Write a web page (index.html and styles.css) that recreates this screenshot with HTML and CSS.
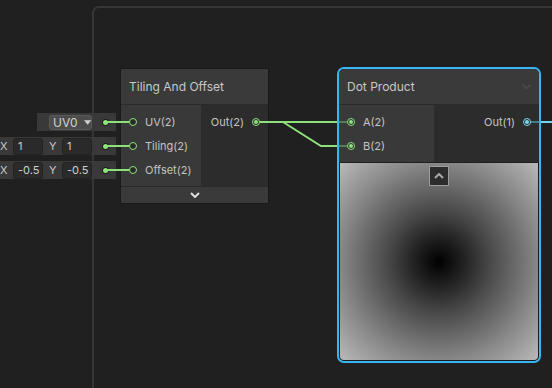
FILE: index.html
```html
<!DOCTYPE html>
<html>
<head>
<meta charset="utf-8">
<link rel="stylesheet" href="styles.css">
</head>
<body>
<div class="canvas">
  <div class="group"></div>

  <div class="inputs-stack">
    <div class="in-row">
      <span class="dropdown">UV0<svg width="8" height="5" viewBox="0 0 8 5"><path d="M0 0H8L4 5Z" fill="#d2d2d2"/></svg></span>
      <span class="wire-dot"></span>
    </div>
    <div class="in-row">
      <span class="lbl">X</span><span class="field">1</span><span class="lbl">Y</span><span class="field">1</span>
      <span class="wire-dot"></span>
    </div>
    <div class="in-row">
      <span class="lbl">X</span><span class="field">-0.5</span><span class="lbl">Y</span><span class="field">-0.5</span>
      <span class="wire-dot"></span>
    </div>
  </div>

  <div class="node tiling">
    <div class="node-header"><span class="title">Tiling And Offset</span></div>
    <div class="node-body">
      <div class="col inputs">
        <div class="port-row"><span class="port"></span><span class="plabel">UV(2)</span></div>
        <div class="port-row"><span class="port"></span><span class="plabel">Tiling(2)</span></div>
        <div class="port-row"><span class="port"></span><span class="plabel">Offset(2)</span></div>
      </div>
      <div class="col outputs">
        <div class="port-row out"><span class="plabel">Out(2)</span><span class="port on"></span></div>
      </div>
    </div>
    <div class="node-footer">
      <svg width="10" height="6" viewBox="0 0 10 6"><polyline points="1,1 5,5 9,1" fill="none" stroke="#dcdcdc" stroke-width="2"/></svg>
    </div>
  </div>

  <div class="node dot">
    <div class="node-header">
      <span class="title">Dot Product</span>
      <svg class="hdr-chev" width="9" height="5" viewBox="0 0 9 5"><polyline points="0.5,0.5 4.5,4.5 8.5,0.5" fill="none" stroke="#4e4e4e" stroke-width="1.2"/></svg>
    </div>
    <div class="node-body">
      <div class="col inputs">
        <div class="port-row"><span class="port on"></span><span class="plabel">A(2)</span></div>
        <div class="port-row"><span class="port on"></span><span class="plabel">B(2)</span></div>
      </div>
      <div class="col outputs">
        <div class="port-row out"><span class="plabel">Out(1)</span><span class="port on cyan"></span></div>
      </div>
    </div>
    <div class="preview">
      <span class="collapse-btn">
        <svg width="10" height="6" viewBox="0 0 10 6"><polyline points="1,5 5,1 9,5" fill="none" stroke="#a9a9a9" stroke-width="2"/></svg>
      </span>
    </div>
  </div>

  <svg class="wires" width="552" height="388" viewBox="0 0 552 388">
    <g stroke="#8de27e" stroke-width="2" fill="none">
      <path d="M106 122H133"/>
      <path d="M106 146H133"/>
      <path d="M106 170H133"/>
      <path d="M256 122H337"/>
      <path d="M283 122L321 146H337"/>
    </g>
    <g stroke="#5b785b" stroke-width="2" fill="none">
      <path d="M339 122H351"/>
      <path d="M339 146H351"/>
    </g>
    <path d="M527 122H539" stroke="#3f7d89" stroke-width="2"/>
    <path d="M541 122H552" stroke="#72d6f2" stroke-width="2"/>
  </svg>
</div>
</body>
</html>
```

FILE: styles.css
```css
* { box-sizing: border-box; }

body {
  margin: 0;
  background: #202020;
  font-family: Inter, "Noto Sans", sans-serif;
}

.canvas {
  position: relative;
  width: 552px;
  height: 388px;
  overflow: hidden;
  background: #202020;
}

.group {
  position: absolute;
  left: 92px;
  top: 6px;
  width: 520px;
  height: 420px;
  border: 2px solid #363636;
  border-radius: 7px;
}

/* inline input fields to the left of the node */
.inputs-stack {
  position: absolute;
  right: 436px;
  top: 113px;
  display: flex;
  flex-direction: column;
  align-items: flex-end;
  gap: 6px;
}

.in-row {
  display: flex;
  align-items: center;
  height: 18px;
  background: #393939;
  padding: 0 8px 0 12px;
  font-size: 11px;
  color: #c6c6c6;
}

.dropdown {
  display: flex;
  align-items: center;
  gap: 6px;
  width: 43px;
  height: 15px;
  padding-left: 3px;
  background: #4c4c4c;
  border: 1px solid #5a5a5a;
  border-radius: 3px;
  color: #d2d2d2;
  font-size: 12px;
}

.lbl { width: 7px; }

.field {
  width: 30px;
  height: 17px;
  line-height: 15px;
  padding-left: 4px;
  background: #2a2a2a;
  border: 1px solid #222;
  border-radius: 3px;
  color: #cfcfcf;
}

.lbl + .field { margin-left: 6px; }
.field + .lbl { margin-left: 6px; }

.wire-dot {
  width: 5px;
  height: 5px;
  margin-left: 11px;
  border-radius: 50%;
  background: #8de27e;
  box-shadow: 0 0 0 1px #1c1c1c;
}

/* nodes */
.node {
  position: absolute;
  font-size: 11px;
  color: #c4c4c4;
}

.tiling {
  left: 121px;
  top: 69px;
  width: 147px;
  box-shadow: 0 0 0 1px #1a1a1a;
}

.dot {
  left: 337px;
  top: 67px;
  width: 204px;
  border: 2px solid #38b5f3;
  border-radius: 7px;
  overflow: hidden;
  background: #2c2c2c;
}

.node-header {
  display: flex;
  align-items: center;
  height: 36px;
  padding: 0 8px;
  background: #3a3a3a;
  border-bottom: 1px solid #2a2a2a;
  font-size: 12px;
  color: #c8c8c8;
}

.hdr-chev { margin-left: auto; }

.node-body {
  display: flex;
  background: #2c2c2c;
}

.dot .node-body { border-bottom: 1px solid #1f1f1f; }

.col {
  display: flex;
  flex-direction: column;
  padding: 5px 0 4px;
}

.col.inputs {
  width: 80px;
  background: #393939;
}

.dot .col.inputs { width: 95px; }

.col.outputs { flex: 1; }

.port-row {
  display: flex;
  align-items: center;
  gap: 8px;
  height: 24px;
  padding-left: 8px;
}

.port-row.out {
  justify-content: flex-end;
  padding-left: 0;
  padding-right: 8px;
}

.port {
  position: relative;
  z-index: 2;
  flex: none;
  width: 8px;
  height: 8px;
  border-radius: 50%;
  border: 1.5px solid #8de27e;
  background: #2a2a2a;
}

.port.on::after {
  content: "";
  position: absolute;
  inset: 1px;
  border-radius: 50%;
  background: #8de27e;
}

.port.cyan { border-color: #7fd8ef; }
.port.cyan::after { background: #7fd8ef; }

.node-footer {
  display: flex;
  align-items: center;
  justify-content: center;
  height: 17px;
  background: #3a3a3a;
  border-top: 1px solid #2a2a2a;
}

.preview {
  display: flex;
  justify-content: center;
  align-items: flex-start;
  height: 198px;
  padding-top: 3px;
  border: 1px solid #1c1c1c;
  border-top: 0;
  border-radius: 0 0 5px 5px;
  background: radial-gradient(circle at 50% 50%, #000 0px, #222 25px, #474747 50px, #898989 100px, #bcbcbc 142px);
}

.collapse-btn {
  display: flex;
  align-items: center;
  justify-content: center;
  width: 20px;
  height: 20px;
  background: #2c2c2c;
  border: 1px solid #9c9c9c;
}

.wires {
  position: absolute;
  left: 0;
  top: 0;
  z-index: 1;
  pointer-events: none;
}
```
